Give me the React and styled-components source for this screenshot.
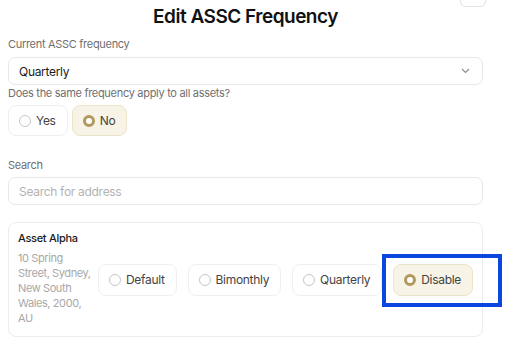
import styled, { createGlobalStyle } from "styled-components";

const GlobalStyle = createGlobalStyle`
  body {
    margin: 0;
    background: #ffffff;
    font-family: Inter, "Noto Sans", sans-serif;
    letter-spacing: -0.3px;
    overflow: hidden;
  }
`;

const Modal = styled.div`
  width: 475px;
  padding: 5px 8px 0;
  display: flex;
  flex-direction: column;
`;

const Header = styled.div`
  position: relative;
  display: flex;
  justify-content: center;
  height: 28px;
`;

const Title = styled.h1`
  margin: 0;
  font-size: 19px;
  line-height: 24px;
  font-weight: 600;
  color: #111111;
  letter-spacing: -0.5px;
`;

const CloseButton = styled.button`
  position: absolute;
  right: -3px;
  top: -24px;
  width: 26px;
  height: 26px;
  border: 1px solid #e2e2e2;
  border-radius: 6px;
  background: #fff;
`;

const Label = styled.div`
  font-size: 11px;
  line-height: 14px;
  color: #6f6f6f;
  margin-top: ${(p) => p.$mt || 0}px;
`;

const Field = styled.div`
  margin-top: ${(p) => p.$mt || 0}px;
  height: 28px;
  box-sizing: border-box;
  border: 1px solid #e8e8e8;
  border-radius: 7px;
  display: flex;
  align-items: center;
  justify-content: space-between;
  padding: 0 12px 0 10px;
  font-size: 12px;
  color: ${(p) => (p.$placeholder ? "#b3b3b3" : "#1c1c1c")};
`;

const RadioRow = styled.div`
  display: flex;
  gap: 4px;
  margin-top: 5px;
`;

const Option = styled.div`
  display: flex;
  align-items: center;
  gap: 5px;
  height: ${(p) => p.$h || 31}px;
  padding: 0 11px 0 10px;
  box-sizing: border-box;
  border-radius: 8px;
  border: 1px solid ${(p) => (p.$active ? "#ece4c8" : "#efefef")};
  background: ${(p) => (p.$active ? "#f7f3e6" : "#ffffff")};
  font-size: 12px;
  color: #434343;
`;

const Dot = styled.span`
  width: ${(p) => (p.$active ? 6 : 10)}px;
  height: ${(p) => (p.$active ? 6 : 10)}px;
  border-radius: 50%;
  border: ${(p) => (p.$active ? "3px solid #b1985c" : "1px solid #c6c6c6")};
  background: #fff;
  flex-shrink: 0;
`;

const Card = styled.div`
  position: relative;
  margin-top: 17px;
  height: 115px;
  box-sizing: border-box;
  border: 1px solid #ececec;
  border-radius: 8px;
  padding: 8px 9px 10px 9px;
  display: flex;
  align-items: center;
  gap: 4px;
`;

const AssetInfo = styled.div`
  width: 76px;
  align-self: flex-start;
`;

const AssetName = styled.div`
  font-size: 11px;
  line-height: 15px;
  font-weight: 500;
  color: #1a1a1a;
`;

const Address = styled.div`
  font-size: 11px;
  line-height: 15px;
  color: #a8a8a8;
  margin-top: 5px;
  letter-spacing: -0.4px;
`;

const Options = styled.div`
  flex: 1;
  display: flex;
  justify-content: space-between;
  margin-top: 2px;
`;

const Highlight = styled.div`
  position: absolute;
  left: 373px;
  top: 31px;
  width: 120px;
  height: 53px;
  box-sizing: border-box;
  border: 4px solid #0a47de;
  pointer-events: none;
`;

const Chevron = () => (
  <svg width="9" height="6" viewBox="0 0 9 6" fill="none">
    <path d="M1 1l3.5 3.5L8 1" stroke="#8a8a8a" strokeWidth="1.1" />
  </svg>
);

const frequencies = ["Default", "Bimonthly", "Quarterly", "Disable"];

export default function App() {
  return (
    <>
      <GlobalStyle />
      <Modal>
        <Header>
          <Title>Edit ASSC Frequency</Title>
          <CloseButton aria-label="Close" />
        </Header>
        <Label $mt={4}>Current ASSC frequency</Label>
        <Field $mt={6}>
          <span>Quarterly</span>
          <Chevron />
        </Field>
        <Label $mt={1}>Does the same frequency apply to all assets?</Label>
        <RadioRow>
          <Option>
            <Dot />
            Yes
          </Option>
          <Option $active>
            <Dot $active />
            No
          </Option>
        </RadioRow>
        <Label $mt={22}>Search</Label>
        <Field $mt={5} $placeholder>
          <span>Search for address</span>
        </Field>
        <Card>
          <AssetInfo>
            <AssetName>Asset Alpha</AssetName>
            <Address>10 Spring Street, Sydney, New South Wales, 2000, AU</Address>
          </AssetInfo>
          <Options>
            {frequencies.map((f) => (
              <Option key={f} $h={32} $active={f === "Disable"}>
                <Dot $active={f === "Disable"} />
                {f}
              </Option>
            ))}
          </Options>
          <Highlight />
        </Card>
      </Modal>
    </>
  );
}
